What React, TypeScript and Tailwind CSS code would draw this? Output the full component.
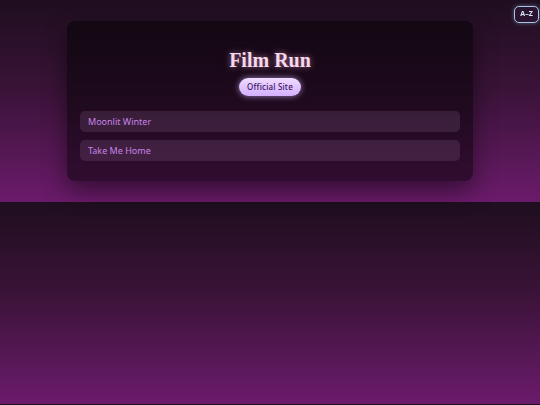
const FILMS = ["Moonlit Winter", "Take Me Home"];

export default function App() {
  return (
    <div className="relative min-h-screen bg-[linear-gradient(180deg,#1f0e1f_0%,#3a1338_45%,#6b1b6b_100%)] bg-[length:100%_202px] bg-repeat-y font-['Noto_Sans',sans-serif]">
      <button className="fixed right-px top-[6px] flex h-[17px] w-[25px] items-center justify-center rounded-[5px] border-[1.5px] border-[#a3c6e4] bg-[#2a1430] text-[7px] font-bold text-[#dce7f2] shadow-[0_0_4px_rgba(160,200,230,0.45)]">
        A–Z
      </button>

      <div className="px-[67px] py-[21px]">
        <div className="flex flex-col items-center rounded-[8px] bg-black/50 px-[13px] pb-[20px] pt-[26px] shadow-[0_10px_24px_rgba(0,0,0,0.45)]">
          <h1 className="h-[26px] font-['Liberation_Serif',serif] text-[20px] font-bold leading-[26px] text-[#f8d8ec] [text-shadow:0_0_6px_rgba(244,170,220,0.6)]">
            Film Run
          </h1>
          <a className="mt-[5px] flex h-[18px] items-center rounded-full bg-[linear-gradient(180deg,#efdcff,#d3afff)] px-[8px] text-[8px] font-medium tracking-[0.2px] text-[#3d0f5e] shadow-[0_0_6px_rgba(214,175,255,0.7)]">
            Official Site
          </a>
          <div className="mt-[15px] flex w-full flex-col gap-[8px]">
            {FILMS.map((film) => (
              <div
                key={film}
                className="flex h-[21px] items-center rounded-[5px] bg-[#e9b8f0]/[0.12] px-[8px] text-[9px] text-[#c884e6]"
              >
                {film}
              </div>
            ))}
          </div>
        </div>
      </div>
    </div>
  );
}
